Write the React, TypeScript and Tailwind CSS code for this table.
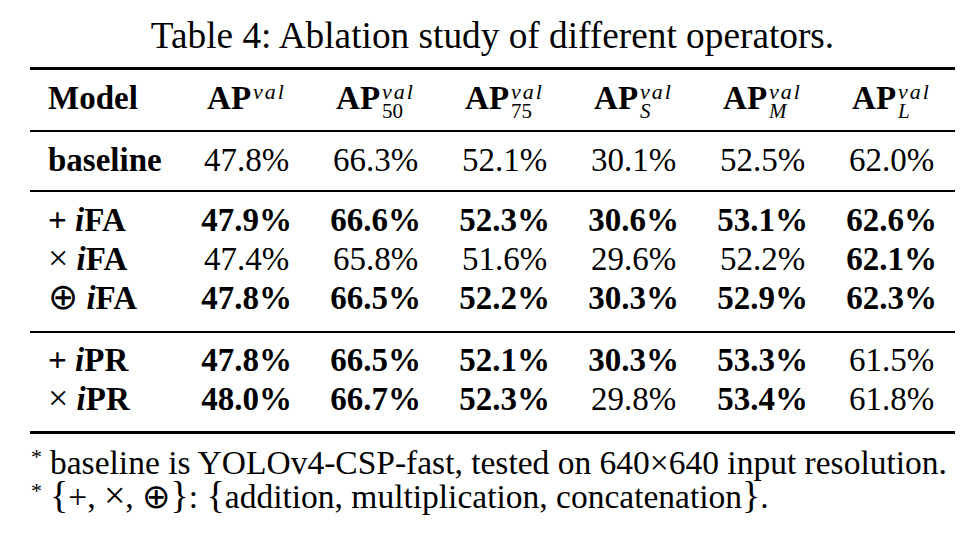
import React from "react";

type Cell = [string, boolean];
type Row = { op: string; name: string; cells: Cell[] };

const serif = "font-['Liberation_Serif','DejaVu_Serif',serif]";
const cols = "grid grid-cols-[152px_repeat(6,129px)]";

const groupA: Row[] = [
  { op: "+", name: "FA", cells: [["47.9%", true], ["66.6%", true], ["52.3%", true], ["30.6%", true], ["53.1%", true], ["62.6%", true]] },
  { op: "×", name: "FA", cells: [["47.4%", false], ["65.8%", false], ["51.6%", false], ["29.6%", false], ["52.2%", false], ["62.1%", true]] },
  { op: "⊕", name: "FA", cells: [["47.8%", true], ["66.5%", true], ["52.2%", true], ["30.3%", true], ["52.9%", true], ["62.3%", true]] },
];

const groupB: Row[] = [
  { op: "+", name: "PR", cells: [["47.8%", true], ["66.5%", true], ["52.1%", true], ["30.3%", true], ["53.3%", true], ["61.5%", false]] },
  { op: "×", name: "PR", cells: [["48.0%", true], ["66.7%", true], ["52.3%", true], ["29.8%", false], ["53.4%", true], ["61.8%", false]] },
];

const headers: { sub?: string; subItalic?: boolean }[] = [
  {},
  { sub: "50" },
  { sub: "75" },
  { sub: "S", subItalic: true },
  { sub: "M", subItalic: true },
  { sub: "L", subItalic: true },
];

const APHead = ({ sub, subItalic }: { sub?: string; subItalic?: boolean }) => (
  <span className="whitespace-nowrap">
    <span className="font-bold">AP</span>
    <span className="relative -top-[10px] ml-[2px] inline-block text-[22px] leading-[20px] italic tracking-[2px]">
      val
      {sub && (
        <span className={`absolute left-0 top-[19px] text-[21px] leading-[20px] tracking-normal ${subItalic ? "italic" : "not-italic"}`}>{sub}</span>
      )}
    </span>
  </span>
);

const Op = ({ op }: { op: string }) => {
  if (op === "⊕") return <span className="font-normal text-[36px] leading-[0] font-['DejaVu_Sans',sans-serif]">⊕</span>;
  if (op === "×") return <span className="font-normal text-[36px] leading-[0]">×</span>;
  return <span className="font-bold">{op}</span>;
};

const Label = ({ op, name }: { op: string; name: string }) => (
  <span className="whitespace-nowrap font-bold">
    <Op op={op} /> <span className="italic">i</span>
    {name}
  </span>
);

const DataRow = ({ row }: { row: Row }) => (
  <div className={`${cols} h-[39px] leading-[39px]`}>
    <div className="pl-[18px]">
      <Label op={row.op} name={row.name} />
    </div>
    {row.cells.map(([v, b], i) => (
      <div key={i} className={`text-center ${b ? "font-bold" : ""}`}>{v}</div>
    ))}
  </div>
);

export default function App() {
  return (
    <div className={`min-h-[558px] w-[978px] bg-white text-black ${serif}`}>
      <div className="ml-[30px] w-[925px] pt-[15px]">
        <h1 className="text-center text-[37.3px] leading-[42px]">Table 4: Ablation study of different operators.</h1>
        <div className="mt-[10px] h-[3px] bg-black" />
        <div className="text-[33px]">
          <div className={`${cols} h-[60px] pt-[9px] leading-[39px]`}>
            <div className="pl-[18px] font-bold">Model</div>
            {headers.map((h, i) => (
              <div key={i} className="text-center">
                <APHead sub={h.sub} subItalic={h.subItalic} />
              </div>
            ))}
          </div>
          <div className="h-[2px] bg-black" />
          <div className={`${cols} h-[58px] pt-[9px] leading-[39px]`}>
            <div className="pl-[18px] font-bold">baseline</div>
            {["47.8%", "66.3%", "52.1%", "30.1%", "52.5%", "62.0%"].map((v) => (
              <div key={v} className="text-center">{v}</div>
            ))}
          </div>
          <div className="h-[2px] bg-black" />
          <div className="pt-[9px] pb-[13px]">
            {groupA.map((r, i) => (
              <DataRow key={i} row={r} />
            ))}
          </div>
          <div className="h-[2px] bg-black" />
          <div className="pt-[8px] pb-[12px]">
            {groupB.map((r, i) => (
              <DataRow key={i} row={r} />
            ))}
          </div>
          <div className="h-[3px] bg-black" />
        </div>
        <div className="mt-[12px] text-[33.5px] leading-[34px]">
          <p className="flex items-start">
            <span className="ml-[1px] mr-[8px] text-[22px] leading-[22px]">*</span>
            <span>baseline is YOLOv4-CSP-fast, tested on 640×640 input resolution.</span>
          </p>
          <p className="flex items-start">
            <span className="ml-[1px] mr-[8px] text-[22px] leading-[22px]">*</span>
            <span className="whitespace-nowrap">
              <span className="text-[38px] leading-[0]">{"{"}</span>
              {"+, "}
              <span className="text-[38px] leading-[0]">×</span>
              {", "}
              <span className="text-[34px] leading-[0] font-['DejaVu_Sans',sans-serif]">⊕</span>
              <span className="text-[38px] leading-[0]">{"}"}</span>
              {": "}
              <span className="text-[38px] leading-[0]">{"{"}</span>
              {"addition, multiplication, concatenation"}
              <span className="text-[38px] leading-[0]">{"}"}</span>
              {"."}
            </span>
          </p>
        </div>
      </div>
    </div>
  );
}
